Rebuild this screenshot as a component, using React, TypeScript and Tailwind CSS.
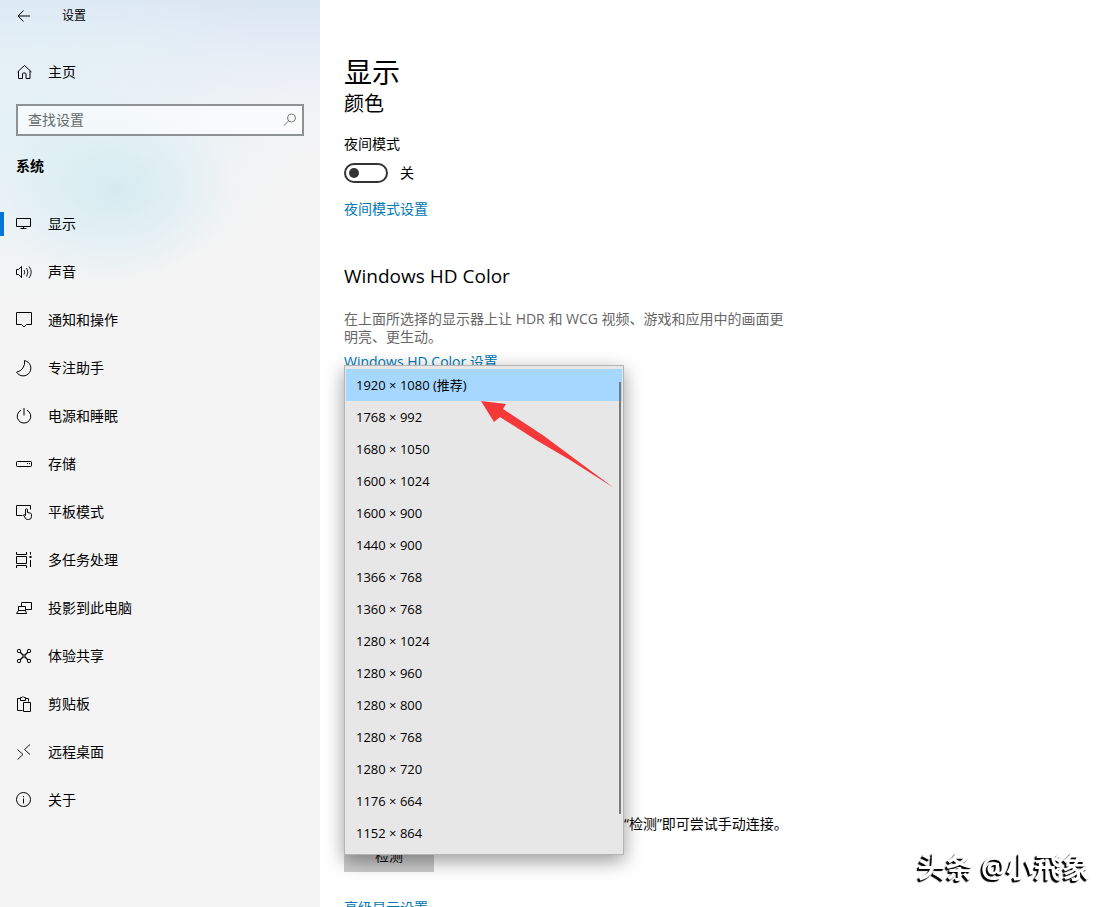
import { useState } from "react";
import type { ReactNode } from "react";

type NavItem = { label: string; icon: ReactNode };

const navItems: NavItem[] = [
  { label: "显示", icon: <path d="M.5 2.500h14v8H.5zM7.500 10.500v2M4.500 12.500h6" /> },
  {
    label: "声音",
    icon: (
      <>
        <path d="M.5 5.500h2l3-3v11l-3-3h-2z" />
        <path d="M8 6q1.600 2 0 4.500M10.500 4q3 4 0 8.500M13 2.500q4.500 5.500 0 11.500" strokeWidth=".9" />
      </>
    ),
  },
  { label: "通知和操作", icon: <path d="M.5.5h15v12h-5L8 15l-2.500-2.500h-5z" /> },
  { label: "专注助手", icon: <path d="M8.500.6A7.700 7.700 0 1 1 .6 12.200 10 10 0 0 0 8.500.6z" /> },
  { label: "电源和睡眠", icon: <path d="M5 2.200a6.800 6.800 0 1 0 6 0M8 0v7.500" /> },
  {
    label: "存储",
    icon: (
      <>
        <rect x=".5" y="5.500" width="15" height="5" rx=".8" />
        <path d="M11 7.500h1M13 7.500h1" />
      </>
    ),
  },
  {
    label: "平板模式",
    icon: (
      <>
        <path d="M6.500 11.500h-6v-10h14v4" />
        <path d="M9.500 11.500V5.800a1 1 0 0 1 2 0V8.500l3 .7q1 .3 1 1.300v2q0 3-3 3h-1q-1.500 0-2.300-1.500L7.500 11q1-1 2 .5" />
      </>
    ),
  },
  {
    label: "多任务处理",
    icon: (
      <>
        <path d="M.5 0v2.500h10V0M.5 4.500h10v7H.5zM.5 16v-2.500h10V16M14.500 0v2.500M14.500 8v7" />
        <path d="M13.500 5h2" strokeWidth="2" />
      </>
    ),
  },
  { label: "投影到此电脑", icon: <path d="M9.500 9.500h6v-7h-10v4M2.500 6.500h7v4h-7zM2.500 10.500L.5 13.500h10l-1-3" /> },
  {
    label: "体验共享",
    icon: (
      <>
        <circle cx="3" cy="3" r="1.700" />
        <circle cx="13" cy="3" r="1.700" />
        <circle cx="3" cy="13" r="1.700" />
        <circle cx="13" cy="13" r="1.700" />
        <circle cx="8" cy="8" r="1.200" />
        <path d="M4.200 4.200L7 7M11.800 4.200L9 7M4.200 11.800L7 9M11.800 11.800L9 9" strokeWidth="1.300" />
      </>
    ),
  },
  { label: "剪贴板", icon: <path d="M6.500 14.500h-5v-12h3M9.500 2.500h3v3M4.500 4.500v-3H6q1-2 2 0h1.500v3zM7.500 6.500h7v9h-7z" /> },
  { label: "远程桌面", icon: <path d="M1.500 5.500L7 10.500l-5.500 5M14 .5L8.500 5.500l5.500 5" strokeWidth=".9" /> },
  {
    label: "关于",
    icon: (
      <>
        <circle cx="7.500" cy="7.500" r="7" />
        <path d="M7.500 6.500v5M7.500 4v1.200" />
      </>
    ),
  },
];

const resolutions = [
  "1920 × 1080 (推荐)",
  "1768 × 992",
  "1680 × 1050",
  "1600 × 1024",
  "1600 × 900",
  "1440 × 900",
  "1366 × 768",
  "1360 × 768",
  "1280 × 1024",
  "1280 × 960",
  "1280 × 800",
  "1280 × 768",
  "1280 × 720",
  "1176 × 664",
  "1152 × 864",
];

function Icon({ children }: { children: ReactNode }) {
  return (
    <svg viewBox="0 0 16 16" className="h-4 w-4 shrink-0 overflow-visible" fill="none" stroke="currentColor" aria-hidden="true">
      {children}
    </svg>
  );
}

function Sidebar() {
  const [active, setActive] = useState("显示");

  return (
    <aside className="w-80 shrink-0 bg-[#f4f4f4] bg-[radial-gradient(ellipse_120px_90px_at_115px_190px,#cce7eeb0_0%,#d6ecf180_50%,transparent_100%),radial-gradient(ellipse_260px_170px_at_40px_130px,#e2f1f6_0%,transparent_100%),linear-gradient(180deg,#dbe6f3_0%,#e5edf6_50px,#f1f2f5_100px,#f4f4f4_180px)]">
      <div className="flex h-8 items-center gap-[30px] px-4 text-xs">
        <button type="button" aria-label="返回">
          <Icon>
            <path d="M14 8H2M7.500 2.500L2 8l5.500 5.500" />
          </Icon>
        </button>
        <h1>设置</h1>
      </div>

      <a href="#home" className="mt-4 flex h-12 items-center gap-4 px-4">
        <Icon>
          <path d="M2.500 7v7.500h4v-4.500q0-1 1-1h1.500q1 0 1 1v4.500h4V7M1.500 8L8.500 1.500l7 6.500" />
        </Icon>
        主页
      </a>

      <div className="mx-4 mt-2 flex h-8 items-center border-2 border-[#8e9292] bg-white/60 pr-1 pl-2.5">
        <input
          type="search"
          aria-label="查找设置"
          placeholder="查找设置"
          className="min-w-0 flex-1 bg-transparent outline-none placeholder:text-[#666a6a]"
        />
        <button type="button" aria-label="搜索" className="text-[#777]">
          <Icon>
            <circle cx="9.500" cy="6" r="4" />
            <path d="M6.500 9L2 13.500" />
          </Icon>
        </button>
      </div>

      <h2 className="mt-[18px] px-4 leading-6 font-bold">系统</h2>

      <nav className="mt-[22px]">
        {navItems.map((item) => (
          <button
            key={item.label}
            type="button"
            onClick={() => setActive(item.label)}
            className="relative flex h-12 w-full items-center gap-4 px-4 text-left"
          >
            {active === item.label && <span className="absolute top-3 left-0 h-6 w-1 bg-[#0078d7]" />}
            <Icon>{item.icon}</Icon>
            {item.label}
          </button>
        ))}
      </nav>
    </aside>
  );
}

function ResolutionList() {
  const [selected, setSelected] = useState(resolutions[0]);

  return (
    <div
      role="listbox"
      aria-label="显示分辨率"
      className="absolute -top-[9px] left-0 w-[280px] border border-[#b4b4b4] bg-[#e7e7e7] px-px pt-[3px] pb-[5px] text-[13px] shadow-[0_6px_18px_rgba(0,0,0,0.4)]"
    >
      {resolutions.map((r) => (
        <button
          key={r}
          type="button"
          role="option"
          aria-selected={selected === r}
          onClick={() => setSelected(r)}
          className={`block h-8 w-full px-2.5 text-left ${selected === r ? "bg-[#a6d8ff]" : ""}`}
        >
          {r}
        </button>
      ))}
      <span className="absolute top-4 right-0.5 h-[432px] w-0.5 bg-[#7a7a7a]" />
      <svg viewBox="0 0 134 88" className="absolute top-[35px] left-[136px] h-[88px] w-[134px]" aria-hidden="true">
        <path d="M0 0L25 3l-3 5L63 35 133 87 89 59 55 39 19 16l-6 5z" fill="#f5383a" />
      </svg>
    </div>
  );
}

export default function App() {
  const [night, setNight] = useState(false);

  return (
    <div className="flex h-screen overflow-hidden bg-white font-['Open_Sans','Noto_Sans_CJK_SC',sans-serif] text-sm text-black">
      <Sidebar />

      <main className="min-w-0 flex-1 px-6 pt-[52px]">
        <h1 className="text-[28px] leading-10">显示</h1>
        <h2 className="text-xl leading-6">颜色</h2>

        <p id="night-label" className="mt-4 leading-6">夜间模式</p>
        <label className="mt-1 flex h-[26px] items-center gap-3">
          <input
            type="checkbox"
            role="switch"
            aria-labelledby="night-label"
            checked={night}
            onChange={(e) => setNight(e.target.checked)}
            className="peer sr-only"
          />
          <span className="flex h-5 w-11 items-center rounded-full border-2 border-[#333] px-[3px] peer-checked:justify-end">
            <span className="h-2.5 w-2.5 rounded-full bg-[#333]" />
          </span>
          {night ? "开" : "关"}
        </label>
        <a href="#night" className="mt-[11px] block w-fit leading-6 text-[#0078b4]">夜间模式设置</a>

        <h2 className="mt-[39px] text-[19px] leading-8">Windows HD Color</h2>
        <p className="mt-[18px] max-w-[444px] leading-[18px] text-[#666]">
          在上面所选择的显示器上让 HDR 和 WCG 视频、游戏和应用中的画面更明亮、更生动。
        </p>
        <a href="#hdcolor" className="mt-1 block w-fit leading-6 text-[#0078b4]">Windows HD Color 设置</a>

        <div className="relative z-10 h-[438px]">
          <ResolutionList />
        </div>

        <p className="relative z-20 pl-[280px] leading-6">“检测”即可尝试手动连接。</p>
        <button type="button" className="mt-1 block h-8 w-[90px] bg-[#ccc]">检测</button>
        <a href="#advanced" className="mt-6 block w-fit leading-6 text-[#0078b4]">高级显示设置</a>
      </main>

      <div className="fixed right-6 bottom-5 text-[28px] leading-10 font-bold text-white [text-shadow:-1px_1px_1px_#000,-2px_2px_1px_#000]">
        头条 @小飛象
      </div>
    </div>
  );
}
